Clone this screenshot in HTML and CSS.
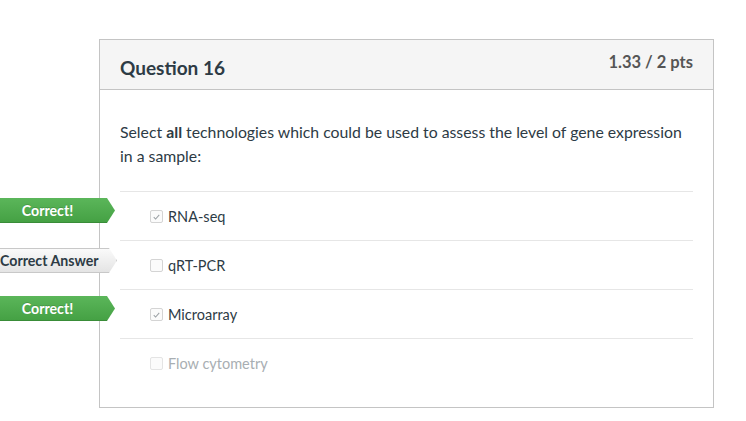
FILE: index.html
```html
<!DOCTYPE html>
<html>
<head>
<meta charset="utf-8">
<link rel="stylesheet" href="styles.css">
</head>
<body>
<div class="question">
  <div class="q-header">
    <h2 class="q-title">Question 16</h2>
    <div class="q-points">1.33 / 2 pts</div>
  </div>
  <div class="q-body">
    <p class="q-text">Select <b>all</b> technologies which could be used to assess the level of gene expression in a sample:</p>
    <div class="answers">
      <div class="answer">
        <span class="flag flag-correct">Correct!</span>
        <span class="check checked"><svg viewBox="0 0 12 12" width="12" height="12"><path d="M3 6.2 L5 8.2 L9 3.6" fill="none" stroke="#9aa0a4" stroke-width="1.1"/></svg></span>
        <span class="label">RNA-seq</span>
      </div>
      <div class="answer">
        <span class="flag flag-answer">Correct Answer</span>
        <span class="check"></span>
        <span class="label">qRT-PCR</span>
      </div>
      <div class="answer">
        <span class="flag flag-correct">Correct!</span>
        <span class="check checked"><svg viewBox="0 0 12 12" width="12" height="12"><path d="M3 6.2 L5 8.2 L9 3.6" fill="none" stroke="#9aa0a4" stroke-width="1.1"/></svg></span>
        <span class="label">Microarray</span>
      </div>
      <div class="answer muted">
        <span class="check"></span>
        <span class="label">Flow cytometry</span>
      </div>
    </div>
  </div>
</div>
</body>
</html>
```
FILE: styles.css
```css
html, body {
  margin: 0;
  padding: 0;
  background: #fff;
  font-family: Lato, "Open Sans", sans-serif;
  color: #2d3b45;
}
body {
  padding: 39px 0 0 99px;
}
.question {
  width: 613px;
  border: 1px solid #c4c4c4;
  background: #fff;
}
.q-header {
  display: flex;
  justify-content: space-between;
  align-items: flex-start;
  height: 49px;
  background: #f5f5f5;
  border-bottom: 1px solid #c4c4c4;
  padding: 0 20px;
}
.q-title {
  margin: 15px 0 0;
  font-size: 19px;
  font-weight: 700;
  line-height: 26px;
  color: #2d3b45;
}
.q-points {
  margin-top: 11px;
  font-size: 16.5px;
  font-weight: 700;
  line-height: 22px;
  color: #555;
}
.q-body {
  padding: 20px 20px 20px;
}
.q-text {
  margin: 10px 0 0;
  max-width: 568px;
  font-size: 15.8px;
  line-height: 24px;
  padding-bottom: 23px;
}
.answers {
  display: flex;
  flex-direction: column;
}
.answer {
  position: relative;
  display: flex;
  align-items: center;
  height: 48px;
  border-top: 1px solid #e6e6e6;
  padding-left: 30px;
  font-size: 14.5px;
}
.check {
  width: 11px;
  height: 11px;
  border: 1px solid #d4d4d4;
  border-radius: 2px;
  background: #fbfbfb;
  display: inline-flex;
  align-items: center;
  justify-content: center;
  margin-right: 5px;
  margin-top: 1px;
}
.check svg {
  display: block;
}
.label {
  color: #2d3b45;
}
.muted .label {
  color: #a8aeb2;
}
.muted .check {
  border-color: #e4e4e4;
}
.flag {
  position: absolute;
  left: -120px;
  top: 6px;
  height: 25px;
  line-height: 25px;
  box-sizing: border-box;
  font-size: 14.2px;
  font-weight: 700;
  text-align: center;
  white-space: nowrap;
  clip-path: polygon(0 0, calc(100% - 8px) 0, 100% 50%, calc(100% - 8px) 100%, 0 100%);
}
.flag-correct {
  width: 115px;
  padding-right: 20px;
  color: #fff;
  background: linear-gradient(#5bb65a, #45a144);
  border-bottom: 1px solid #398c38;
  text-shadow: 0 -1px 0 rgba(0,0,0,0.15);
}
.flag-answer {
  top: 7px;
  width: 117px;
  padding-right: 18px;
  color: #2d3b45;
  background: linear-gradient(#fafafa, #e4e4e4);
  border: 1px solid #c8c8c8;
  border-left: none;
  line-height: 23px;
}
```
